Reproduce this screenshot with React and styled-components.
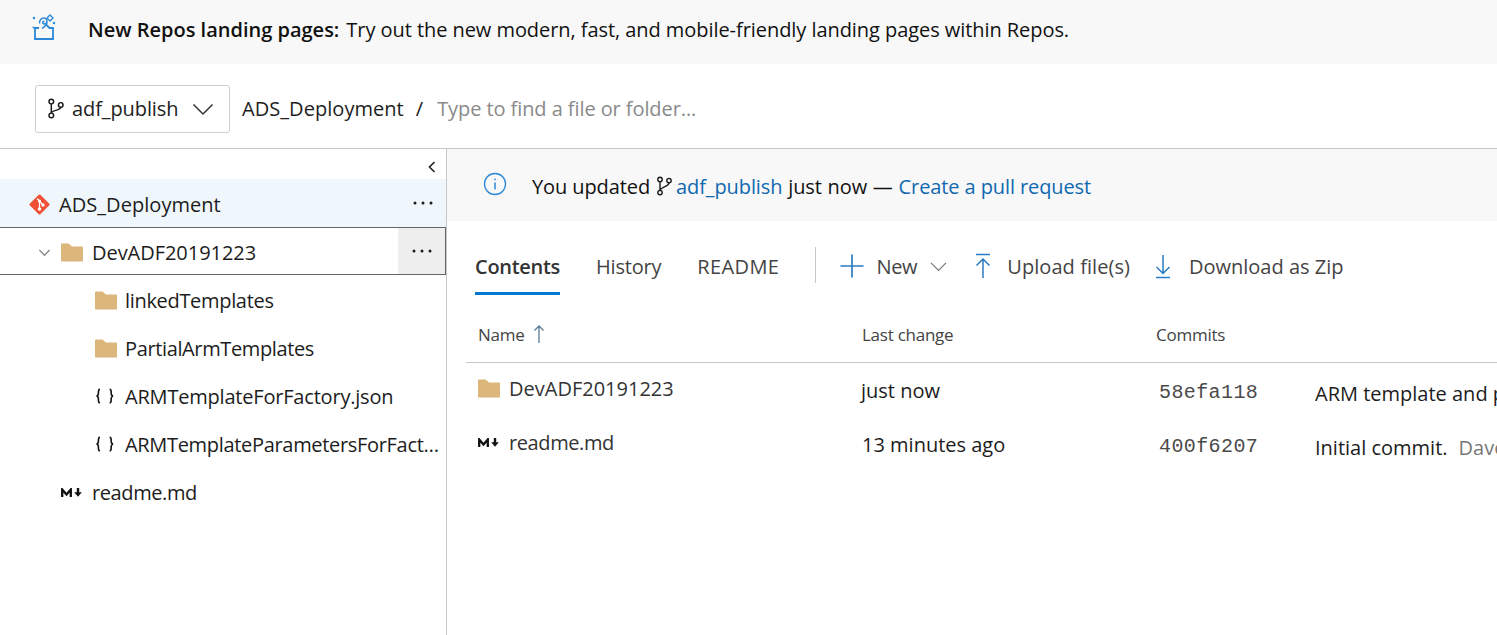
import React from "react";
import styled, { createGlobalStyle } from "styled-components";

const Global = createGlobalStyle`
  html, body { margin: 0; padding: 0; background: #fff; overflow: hidden; }
  body { font-family: "Open Sans", "Noto Sans", "Liberation Sans", sans-serif; color: #1a1a1a; }
`;
const Page = styled.div`width: 1497px; height: 635px; display: flex; flex-direction: column; overflow: hidden;`;
const Banner = styled.div`height: 64px; flex: none; box-sizing: border-box; background: #f8f8f8; display: flex; align-items: center; padding: 0 0 6px 31px; font-size: 20px; letter-spacing: -0.06px; color: #111; white-space: nowrap;`;
const BannerIcon = styled.svg`width: 26px; height: 26px; margin-right: 31px; margin-top: -4px; flex: none;`;
const Strong = styled.strong`font-weight: 600; letter-spacing: 0; margin-right: 7px;`;
const PathBar = styled.div`height: 85px; flex: none; box-sizing: border-box; border-bottom: 1px solid #c8c8c8; display: flex; align-items: center; padding: 6px 0 1px 35px; font-size: 20px; letter-spacing: 0;`;
const BranchButton = styled.div`width: 195px; height: 48px; box-sizing: border-box; border: 1px solid #cfcfcf; border-radius: 3px; display: flex; align-items: center; padding-left: 9px; color: #222; letter-spacing: -0.1px;`;
const BranchLabel = styled.span`margin-left: 6px; flex: 1;`;
const Chevron = styled.svg`width: ${p => p.$size}px; height: ${p => p.$size}px; flex: none;`;
const Crumb = styled.span`margin-left: 12px; color: #1e1e1e; letter-spacing: 0.05px;`;
const Slash = styled.span`margin-left: 12px; margin-right: 14px;`;
const PathInput = styled.span`color: #8a8a8a; letter-spacing: -0.08px;`;
const Body = styled.div`flex: 1; display: flex; min-height: 0;`;
const Side = styled.aside`width: 447px; flex: none; box-sizing: border-box; border-right: 1px solid #c8c8c8; display: flex; flex-direction: column;`;
const CollapseBar = styled.div`height: 30px; box-sizing: border-box; display: flex; justify-content: flex-end; align-items: center; padding: 5px 9px 0 0;`;
const Slot = styled.span`width: ${p => p.$w}px; flex: none; display: flex; align-items: center;`;
const RowText = styled.span`flex: 1; min-width: 0; overflow: hidden; text-overflow: ellipsis; letter-spacing: ${p => p.$ls ?? -0.32}px;`;
const TreeRow = styled.div`
  height: 48px; flex: none; box-sizing: border-box; display: flex; align-items: center; font-size: 20px; color: #1c1c1c; white-space: nowrap;
  padding-left: ${p => p.$indent}px;
  background: ${p => p.$selected ? "#eff6fc" : "transparent"};
  border-top: ${p => p.$focused ? "1px solid #666" : "none"};
  border-bottom: ${p => p.$focused ? "1px solid #666" : "none"};
  border-right: ${p => p.$focused ? "1px solid #666" : "none"};
  & > ${RowText}, & > ${Slot} { padding-top: 2px; }
`;
const More = styled.span`width: 47px; height: 100%; flex: none; display: flex; align-items: center; justify-content: center; background: ${p => p.$active ? "#eeeeee" : "transparent"};`;
const Main = styled.main`flex: 1; min-width: 0; display: flex; flex-direction: column;`;
const Notice = styled.div`height: 72px; flex: none; box-sizing: border-box; background: #f8f8f8; display: flex; align-items: center; padding: 2px 0 0 36px; font-size: 20px; letter-spacing: -0.1px; color: #111; white-space: nowrap;`;
const InfoIcon = styled.svg`width: 24px; height: 24px; margin-right: 25px; margin-top: -4px; flex: none;`;
const Link = styled.span`color: #1068b0;`;
const BranchInline = styled.svg`width: 20px; height: 22px; margin-left: 4px; margin-right: 2px; flex: none;`;
const Spaced = styled.span`white-space: pre; word-spacing: ${p => p.$ws ?? 0}px;`;
const Tabs = styled.div`height: 74px; flex: none; display: flex; align-items: flex-start; padding-left: 28px; padding-top: 25px; font-size: 20px; color: #3b3b3b; box-sizing: border-box; white-space: nowrap;`;
const Tab = styled.div`height: 49px; display: flex; align-items: center; box-sizing: border-box; margin-right: 36px; letter-spacing: ${p => p.$ls ?? -0.3}px; border-bottom: 3px solid ${p => p.$active ? "#0078d4" : "transparent"}; font-weight: ${p => p.$active ? 600 : 400}; padding-bottom: 6px; color: ${p => p.$active ? "#333" : "#444"};`;
const Divider = styled.div`width: 1px; height: 36px; background: #c8c8c8; margin-top: 1px; margin-right: 23px; flex: none;`;
const Action = styled.div`height: 40px; display: flex; align-items: center; color: #444; letter-spacing: ${p => p.$ls ?? 0}px; margin-right: ${p => p.$gap}px;`;
const ActionIcon = styled.svg`width: ${p => p.$w || 26}px; height: 26px; margin-right: ${p => p.$mr}px; flex: none;`;
const Table = styled.div`margin-left: 19px; flex: 1; overflow: hidden;`;
const HeadRow = styled.div`height: 69px; box-sizing: border-box; border-bottom: 1px solid #c8c8c8; display: grid; grid-template-columns: 396px 294px 1fr; align-items: center; font-size: 17px; letter-spacing: -0.25px; color: #444; padding-top: 12px; margin-top: -1px;`;
const HeadCell = styled.div`display: flex; align-items: center; padding-left: ${p => p.$pl ?? 12}px;`;
const DataRow = styled.div`height: 54px; display: grid; grid-template-columns: 396px 294px 159px 1fr; align-items: center; font-size: 20px; letter-spacing: 0; color: #1c1c1c; white-space: nowrap;`;
const NameCell = styled.div`display: flex; align-items: center; padding-left: 12px; color: #333; margin-top: -4px; letter-spacing: ${p => p.$ls ?? 0}px;`;
const TimeCell = styled.div`margin-left: ${p => p.$ml ?? 0}px;`;
const HashCell = styled.div`font-family: "Liberation Mono", monospace; font-size: 20px; letter-spacing: 0.4px; color: #4a4a4a; padding-left: 3px; margin-top: 5px;`;
const MsgCell = styled.div`overflow: hidden; margin-top: 6px;`;
const Author = styled.span`color: #777; margin-left: 11px;`;

const BranchGlyph = ({ size = 20 }) => (
  <svg width={size} height={size} viewBox="0 0 20 20" fill="none" stroke="#1a1a1a" strokeWidth="1.4">
    <circle cx="6" cy="3.4" r="2.2" /><circle cx="6" cy="16.6" r="2.2" /><circle cx="15" cy="6.6" r="2.2" />
    <path d="M6 5.6v8.8M15 8.8c0 2.8-6 2.4-9 5" />
  </svg>
);
const Folder = () => (
  <svg width="22" height="19" viewBox="0 0 22 19"><path d="M0 1.5C0 .9.5.5 1 .5h6.500L11 3.600h10c.6 0 1 .4 1 1V17.400c0 .6-.4 1-1 1H1c-.5 0-1-.4-1-1z" fill="#dcb67a" /></svg>
);
const Dots = () => (
  <svg width="20" height="6" viewBox="0 0 20 6" fill="#1a1a1a"><circle cx="2" cy="3" r="1.500" /><circle cx="10" cy="3" r="1.500" /><circle cx="18" cy="3" r="1.500" /></svg>
);
const Markdown = () => (
  <svg width="21" height="9" viewBox="0 0 21 9">
    <path d="M1.200 9V1.500L5.500 6.500 9.800 1.500V9" fill="none" stroke="#111" strokeWidth="2.300" />
    <path d="M15.800 0h2.400v4.200h2.600L17 8.800 13.200 4.200h2.600z" fill="#111" />
  </svg>
);
const Braces = () => (
  <svg width="20" height="16" viewBox="0 0 20 16" fill="none" stroke="#111" strokeWidth="1.600"><path d="M5 1.200C3 1.200 3.600 3 3.400 5.400 3.300 7 2.800 8 1.400 8c1.400 0 1.900 1 2 2.600.2 2.400-.4 4.200 1.600 4.200M14.600 1.200c2 0 1.400 1.800 1.600 4.200.1 1.600.6 2.600 2 2.600-1.400 0-1.900 1-2 2.600-.2 2.400.4 4.200-1.600 4.200" /></svg>
);
const Down = ({ size = 20, color = "#333", w = 1.5 }) => (
  <Chevron $size={size} viewBox="0 0 24 24" fill="none" stroke={color} strokeWidth={w}><path d="M2.500 7.500 12 17l9.500-9.500" /></Chevron>
);

export default function App() {
  return (
    <Page>
      <Global />
      <Banner>
        <BannerIcon viewBox="0 0 26 26" fill="none" stroke="#2b88d8" strokeWidth="1.500">
          <path d="M8 14H4v11h18V14h-3.500L15 10.500" strokeWidth="1.800" />
          <path d="M8.500 9.500c-.3-3.300 2-5.500 4.300-5.500 2.300 0 3.600 2 3.100 4-.5 2-3 2.500-4 1.200-.7-1 .3-2.200 1.500-1.700M16 8.500c0 2.500-2.500 4-5 6" />
          <path d="M19 1l3 3-3 3-3-3z" strokeWidth="1.300" />
          <circle cx="3" cy="4" r="1.200" fill="#2b88d8" stroke="none" /><circle cx="23" cy="9" r="1.200" fill="#2b88d8" stroke="none" /><circle cx="2.500" cy="13.500" r="1" fill="#2b88d8" stroke="none" />
        </BannerIcon>
        <Strong>New Repos landing pages:</Strong>
        <span>Try out the new modern, fast, and mobile-friendly landing pages within Repos.</span>
      </Banner>
      <PathBar>
        <BranchButton>
          <BranchGlyph size={21} />
          <BranchLabel>adf_publish</BranchLabel>
          <Slot $w={38}><Down size={24} /></Slot>
        </BranchButton>
        <Crumb>ADS_Deployment</Crumb>
        <Slash>/</Slash>
        <PathInput>Type to find a file or folder...</PathInput>
      </PathBar>
      <Body>
        <Side>
          <CollapseBar>
            <svg width="10" height="14" viewBox="0 0 10 14" fill="none" stroke="#222" strokeWidth="1.600"><path d="M7.500 2 2.500 7l5 5" /></svg>
          </CollapseBar>
          <TreeRow $selected $indent={29}>
            <Slot $w={30}>
              <svg width="21" height="21" viewBox="0 0 21 21"><rect x="3" y="3" width="15" height="15" rx="1.500" transform="rotate(45 10.500 10.500)" fill="#f05033" /><g stroke="#fff" strokeWidth="1.200" fill="#fff"><path d="M8 4.500 14 11M10.500 7v8" fill="none" /><circle cx="10.500" cy="7" r="1" /><circle cx="10.500" cy="15" r="1.200" /><circle cx="14" cy="11" r="1.100" /></g></svg>
            </Slot>
            <RowText $ls={0.05}>ADS_Deployment</RowText>
            <More><Dots /></More>
          </TreeRow>
          <TreeRow $focused $indent={38}>
            <Slot $w={23}><Down size={13} color="#8a8a8a" w={2.600} /></Slot>
            <Slot $w={31}><Folder /></Slot>
            <RowText $ls={-0.04}>DevADF20191223</RowText>
            <More $active><Dots /></More>
          </TreeRow>
          <TreeRow $indent={95}><Slot $w={30}><Folder /></Slot><RowText>linkedTemplates</RowText></TreeRow>
          <TreeRow $indent={95}><Slot $w={30}><Folder /></Slot><RowText $ls={-0.37}>PartialArmTemplates</RowText></TreeRow>
          <TreeRow $indent={95}><Slot $w={30}><Braces /></Slot><RowText $ls={-0.2}>ARMTemplateForFactory.json</RowText></TreeRow>
          <TreeRow $indent={95}><Slot $w={30}><Braces /></Slot><RowText>ARMTemplateParametersForFactory.json</RowText><Slot $w={6} /></TreeRow>
          <TreeRow $indent={61}><Slot $w={31}><Markdown /></Slot><RowText $ls={-0.4}>readme.md</RowText></TreeRow>
        </Side>
        <Main>
          <Notice>
            <InfoIcon viewBox="0 0 24 24" fill="none" stroke="#2b88d8" strokeWidth="1.300">
              <circle cx="12" cy="12" r="10.500" /><path d="M12 10.500v7" strokeWidth="1.500" /><circle cx="12" cy="7.300" r=".9" fill="#2b88d8" stroke="none" />
            </InfoIcon>
            <Spaced>You updated</Spaced>
            <BranchInline viewBox="0 0 20 20" fill="none" stroke="#1a1a1a" strokeWidth="1.400">
              <circle cx="6" cy="3.400" r="2.200" /><circle cx="6" cy="16.600" r="2.200" /><circle cx="15" cy="4.600" r="2.200" />
              <path d="M6 5.600v8.800M15 6.800c0 3.800-6 3.400-9 7" />
            </BranchInline>
            <Link>adf_publish</Link>
            <Spaced $ws={0.7}> just now — </Spaced>
            <Link>Create a pull request</Link>
          </Notice>
          <Tabs>
            <Tab $active>Contents</Tab>
            <Tab $ls={-0.2}>History</Tab>
            <Tab $ls={0.4}>README</Tab>
            <Divider />
            <Action $gap={25} $ls={-0.3}>
              <ActionIcon $mr={11} viewBox="0 0 26 26" fill="none" stroke="#2b7cc4" strokeWidth="1.700"><path d="M13 1.500v23M1.500 13h23" /></ActionIcon>
              New
              <Slot $w={12} />
              <Down size={19} color="#777" w={1.500} />
            </Action>
            <Action $gap={23} $ls={0.06}>
              <ActionIcon $w={20} $mr={14} viewBox="0 0 20 26" fill="none" stroke="#2b7cc4" strokeWidth="1.500"><path d="M3 1.500h14M10 25V6M3.500 12.500 10 6l6.500 6.500" /></ActionIcon>
              Upload file(s)
            </Action>
            <Action $gap={0}>
              <ActionIcon $w={20} $mr={16} viewBox="0 0 20 26" fill="none" stroke="#2b7cc4" strokeWidth="1.500"><path d="M3 24.500h14M10 2v18M3.500 14 10 20.500 16.500 14" /></ActionIcon>
              Download as Zip
            </Action>
          </Tabs>
          <Table>
            <HeadRow>
              <HeadCell>Name
                <Slot $w={8} />
                <svg width="12" height="20" viewBox="0 0 12 20" fill="none" stroke="#5c7c96" strokeWidth="1.300"><path d="M6 19V2M1.500 6.500 6 2l4.500 4.500" /></svg>
              </HeadCell>
              <HeadCell $pl={0}>Last change</HeadCell>
              <HeadCell $pl={0}>Commits</HeadCell>
            </HeadRow>
            <DataRow>
              <NameCell><Slot $w={31}><Folder /></Slot>DevADF20191223</NameCell>
              <TimeCell $ml={-1}>just now</TimeCell>
              <HashCell>58efa118</HashCell>
              <MsgCell>ARM template and parameters</MsgCell>
            </DataRow>
            <DataRow>
              <NameCell $ls={-0.4}><Slot $w={31}><Markdown /></Slot>readme.md</NameCell>
              <TimeCell>13 minutes ago</TimeCell>
              <HashCell>400f6207</HashCell>
              <MsgCell>Initial commit.<Author>Dave</Author></MsgCell>
            </DataRow>
          </Table>
        </Main>
      </Body>
    </Page>
  );
}
